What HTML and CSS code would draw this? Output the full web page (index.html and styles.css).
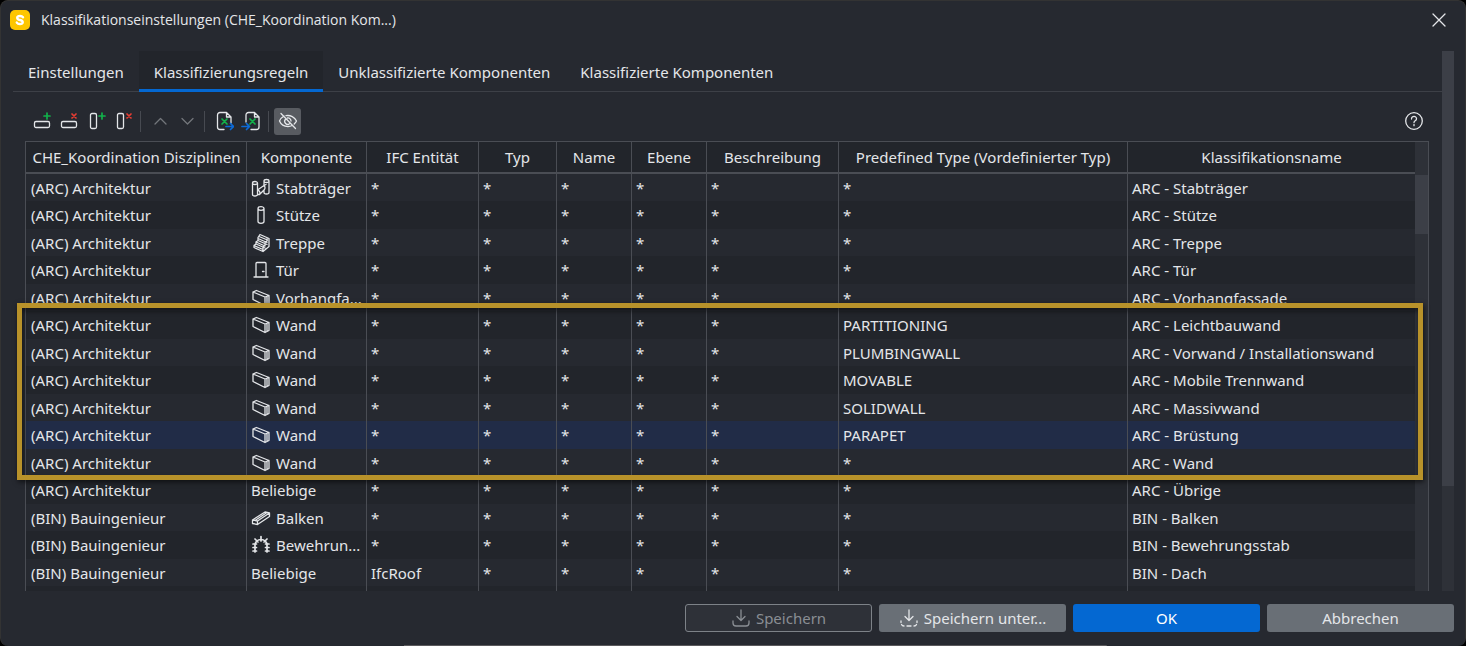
FILE: index.html
```html
<!DOCTYPE html>
<html lang="de">
<head>
  <meta charset="UTF-8">
  <title>Klassifikationseinstellungen</title>
  <meta name="viewport" content="width=device-width, initial-scale=1.0">
  <link rel="stylesheet" href="styles.css">
</head>
<body>

<!-- Symbole -->
<svg class="sprite" xmlns="http://www.w3.org/2000/svg">
  <symbol id="i-beam-col" viewBox="0 0 20 20">
    <path d="M1.500 5v11.500a2.500 1.500 0 0 0 5 0V5M1.500 5a2.500 1.500 0 0 1 5 0a2.500 1.500 0 0 1-5 0M13 3v4.500L6.500 12M13 3a2.500 1.500 0 0 1 5 0a2.500 1.500 0 0 1-5 0M18 3v11.500a2.500 1.500 0 0 1-5 0V12L8.500 16.500H6.500M13 7.500a3 3 0 0 1 0 4.500M6.500 12a3 3 0 0 1 2 4.500M13 7.500l2-1"/>
  </symbol>
  <symbol id="i-column" viewBox="0 0 20 20">
    <path d="M7 3.500v13a3 1.800 0 0 0 6 0v-13a3 1.800 0 0 0-6 0a3 1.800 0 0 0 6 0"/>
  </symbol>
  <symbol id="i-stairs" viewBox="0 0 20 20">
    <path d="M9 1.500l9 4v8l-6 5-9-4v-2l2-1.500V9l2-1.500V4.500zM12 18v-4l2-1.500v-3l2-1.500V6M3 12.500l9 4M5 11l9 4M5 9l9 4M7 7.500l9 4M7 5.500l9 4M8 3.500l8.500 3.500"/>
  </symbol>
  <symbol id="i-door" viewBox="0 0 20 20">
    <path d="M3 17h14M5 17V3.500a1 1 0 0 1 1-1h8a1 1 0 0 1 1 1V17M11.500 11.500h1.500"/>
  </symbol>
  <symbol id="i-wall" viewBox="0 0 20 20">
    <path d="M2 4v7.500l12 6V9zM2 4l3.500-1.500L18 7.500 14 9M18 7.500v8L14 17.500M16 9v7"/>
  </symbol>
  <symbol id="i-beam" viewBox="0 0 20 20">
    <path d="M1.500 12L14 4l4.500 1v3.500L6.500 16.500l-5-1zM1.500 12l5 1v3.500M6.500 13l12-8M4 12.500L16 4.500"/>
  </symbol>
  <symbol id="i-rebar" viewBox="0 0 20 20">
    <path class="bold" d="M4 17V10a6 5.500 0 0 1 12 0v7M10 1.500v4.500M4 4l3 3M16 4l-3 3M2 9h3.500M14.500 9H18M2 12.500h3.500M14.500 12.500H18M2 16h3.500M14.500 16H18"/>
  </symbol>
  <symbol id="i-save" viewBox="0 0 20 20">
    <path d="M10 2v10M6 8.500l4 4 4-4M2 13v2a3 3 0 0 0 3 3h10a3 3 0 0 0 3-3v-2"/>
  </symbol>
  <symbol id="i-save-as" viewBox="0 0 20 20">
    <path d="M10 2v10M6 8.500l4 4 4-4M2 13v1.500M2.500 16.500Q3.200 18 5 18M8 18h4M15 18q1.800 0 2.500-1.500M18 14.500V13"/>
  </symbol>
</svg>

<div class="window">
  <header class="titlebar">
    <svg class="logo" viewBox="0 0 20 20">
      <rect width="20" height="20" rx="5" fill="#fdc600"/>
      <path d="M13 7.200C12.300 6.300 11.300 6 10 6c-3.800 0-3.600 3.400 0 4s3.700 4 0 4c-1.400 0-2.500-.4-3.200-1.400" fill="none" stroke="#fff" stroke-width="2.400"/>
    </svg>
    <h1>Klassifikationseinstellungen (CHE_Koordination Kom...)</h1>
    <button class="close" aria-label="Schließen">
      <svg viewBox="0 0 14 14"><path d="M1 1l12 12M13 1L1 13"/></svg>
    </button>
  </header>

  <main class="content">
    <div class="page">
      <nav class="tabs">
        <button class="tab">Einstellungen</button>
        <button class="tab active">Klassifizierungsregeln</button>
        <button class="tab">Unklassifizierte Komponenten</button>
        <button class="tab">Klassifizierte Komponenten</button>
      </nav>

      <div class="toolbar">
        <button class="tool" aria-label="Zeile hinzufügen">
          <svg viewBox="0 0 20 20"><rect x="2.500" y="10.500" width="15" height="6" rx="1.500"/><path class="green" d="M15 2v6M12 5h6"/></svg>
        </button>
        <button class="tool" aria-label="Zeile löschen">
          <svg viewBox="0 0 20 20"><rect x="2.500" y="10.500" width="15" height="6" rx="1.500"/><path class="red" d="M13 3l4 4M17 3l-4 4"/></svg>
        </button>
        <button class="tool" aria-label="Spalte hinzufügen">
          <svg viewBox="0 0 20 20"><rect x="4.500" y="2.500" width="6" height="15" rx="1.500"/><path class="green" d="M16 2v6M13 5h6"/></svg>
        </button>
        <button class="tool" aria-label="Spalte löschen">
          <svg viewBox="0 0 20 20"><rect x="4.500" y="2.500" width="6" height="15" rx="1.500"/><path class="red" d="M14 3l4 4M18 3l-4 4"/></svg>
        </button>
        <span class="sep"></span>
        <button class="tool dim" aria-label="Nach oben">
          <svg viewBox="0 0 20 20"><path d="M5 13l5.500-5.500L16 13"/></svg>
        </button>
        <button class="tool dim" aria-label="Nach unten">
          <svg viewBox="0 0 20 20"><path d="M5 7.500l5.500 5.500L16 7.500"/></svg>
        </button>
        <span class="sep"></span>
        <button class="tool" aria-label="Excel exportieren">
          <svg viewBox="0 0 20 20"><path d="M10 18.500H6A2.500 2.500 0 0 1 3.500 16V4A2.500 2.500 0 0 1 6 1.500h6.500L17 6v6M12.500 1.500V6H17"/><path class="green" d="M8 8l5 5M13 8l-5 5"/><path class="blue" d="M12 15.500h7M16.500 12.500l3 3-3 3"/></svg>
        </button>
        <button class="tool" aria-label="Excel importieren">
          <svg viewBox="0 0 20 20"><path d="M10 18.500h5.500A2.500 2.500 0 0 0 18 16V6l-4.500-4.500H7.500A2.500 2.500 0 0 0 5 4v7M13.500 1.500V6H18"/><path class="green" d="M9 8l5 5M14 8l-5 5"/><path class="blue" d="M1 15.500h7M5.500 12.500l3 3-3 3"/></svg>
        </button>
        <span class="sep"></span>
        <button class="tool pressed" aria-label="Ausblenden">
          <svg viewBox="0 0 20 20"><path d="M6 5C3.500 6.500 2 8.500 1.500 10c1.500 3.500 5 5.500 8.500 5.500 1.500 0 3-.4 4.200-1M8 4.700c4.500-.9 8.700 1.500 10.500 5.300-.4 1-1.200 2-2.300 3M7.300 8.500a3 3 0 0 0 4.200 4.200M9.500 7a3 3 0 0 1 3.500 3M3 2.500l14.500 15"/></svg>
        </button>
        <button class="tool help" aria-label="Hilfe">
          <svg viewBox="0 0 20 20"><circle cx="10" cy="10" r="8.300"/><path d="M7.500 8c0-3.500 5.200-3.300 5 0 0 1.800-2.500 1.800-2.500 3.500M10 13.500v1.200"/></svg>
        </button>
      </div>

      <div class="grid">
        <div class="grid-view">
          <table class="rules">
            <colgroup>
              <col class="c-disc"><col class="c-comp"><col class="c-ifc"><col class="c-typ"><col class="c-name"><col class="c-name"><col class="c-desc"><col class="c-pre"><col>
            </colgroup>
            <thead>
              <tr><th>CHE_Koordination Disziplinen</th><th>Komponente</th><th>IFC Entität</th><th>Typ</th><th>Name</th><th>Ebene</th><th>Beschreibung</th><th>Predefined Type (Vordefinierter Typ)</th><th>Klassifikationsname</th></tr>
            </thead>
            <tbody>
              <tr><td>(ARC) Architektur</td><td><svg class="ico"><use href="#i-beam-col"/></svg>Stabträger</td><td>*</td><td>*</td><td>*</td><td>*</td><td>*</td><td>*</td><td>ARC - Stabträger</td></tr>
              <tr><td>(ARC) Architektur</td><td><svg class="ico"><use href="#i-column"/></svg>Stütze</td><td>*</td><td>*</td><td>*</td><td>*</td><td>*</td><td>*</td><td>ARC - Stütze</td></tr>
              <tr><td>(ARC) Architektur</td><td><svg class="ico"><use href="#i-stairs"/></svg>Treppe</td><td>*</td><td>*</td><td>*</td><td>*</td><td>*</td><td>*</td><td>ARC - Treppe</td></tr>
              <tr><td>(ARC) Architektur</td><td><svg class="ico"><use href="#i-door"/></svg>Tür</td><td>*</td><td>*</td><td>*</td><td>*</td><td>*</td><td>*</td><td>ARC - Tür</td></tr>
              <tr><td>(ARC) Architektur</td><td><svg class="ico"><use href="#i-wall"/></svg>Vorhangfa...</td><td>*</td><td>*</td><td>*</td><td>*</td><td>*</td><td>*</td><td>ARC - Vorhangfassade</td></tr>
              <tr><td>(ARC) Architektur</td><td><svg class="ico"><use href="#i-wall"/></svg>Wand</td><td>*</td><td>*</td><td>*</td><td>*</td><td>*</td><td>PARTITIONING</td><td>ARC - Leichtbauwand</td></tr>
              <tr><td>(ARC) Architektur</td><td><svg class="ico"><use href="#i-wall"/></svg>Wand</td><td>*</td><td>*</td><td>*</td><td>*</td><td>*</td><td>PLUMBINGWALL</td><td>ARC - Vorwand / Installationswand</td></tr>
              <tr><td>(ARC) Architektur</td><td><svg class="ico"><use href="#i-wall"/></svg>Wand</td><td>*</td><td>*</td><td>*</td><td>*</td><td>*</td><td>MOVABLE</td><td>ARC - Mobile Trennwand</td></tr>
              <tr><td>(ARC) Architektur</td><td><svg class="ico"><use href="#i-wall"/></svg>Wand</td><td>*</td><td>*</td><td>*</td><td>*</td><td>*</td><td>SOLIDWALL</td><td>ARC - Massivwand</td></tr>
              <tr class="selected"><td>(ARC) Architektur</td><td><svg class="ico"><use href="#i-wall"/></svg>Wand</td><td>*</td><td>*</td><td>*</td><td>*</td><td>*</td><td>PARAPET</td><td>ARC - Brüstung</td></tr>
              <tr><td>(ARC) Architektur</td><td><svg class="ico"><use href="#i-wall"/></svg>Wand</td><td>*</td><td>*</td><td>*</td><td>*</td><td>*</td><td>*</td><td>ARC - Wand</td></tr>
              <tr><td>(ARC) Architektur</td><td>Beliebige</td><td>*</td><td>*</td><td>*</td><td>*</td><td>*</td><td>*</td><td>ARC - Übrige</td></tr>
              <tr><td>(BIN) Bauingenieur</td><td><svg class="ico"><use href="#i-beam"/></svg>Balken</td><td>*</td><td>*</td><td>*</td><td>*</td><td>*</td><td>*</td><td>BIN - Balken</td></tr>
              <tr><td>(BIN) Bauingenieur</td><td><svg class="ico"><use href="#i-rebar"/></svg>Bewehrun...</td><td>*</td><td>*</td><td>*</td><td>*</td><td>*</td><td>*</td><td>BIN - Bewehrungsstab</td></tr>
              <tr><td>(BIN) Bauingenieur</td><td>Beliebige</td><td>IfcRoof</td><td>*</td><td>*</td><td>*</td><td>*</td><td>*</td><td>BIN - Dach</td></tr>
              <tr><td></td><td></td><td></td><td></td><td></td><td></td><td></td><td></td><td></td></tr>
            </tbody>
          </table>
          <div class="grid-scroll"><div class="thumb"></div></div>
        </div>
        <div class="marker"></div>
      </div>
    </div>
    <div class="page-scroll"><div class="thumb"></div></div>
  </main>

  <footer class="actions">
    <button class="btn" disabled><svg class="ico"><use href="#i-save"/></svg>Speichern</button>
    <button class="btn gray"><svg class="ico"><use href="#i-save-as"/></svg>Speichern unter...</button>
    <button class="btn primary">OK</button>
    <button class="btn gray">Abbrechen</button>
  </footer>
</div>

</body>
</html>
```

FILE: styles.css
```css
* {
  box-sizing: border-box;
}

body {
  margin: 0;
  background: #000;
  color: #e4e6e9;
  font: 15px/20px "Noto Sans", "Open Sans", sans-serif;
}

button {
  font: inherit;
  color: inherit;
  background: none;
  border: 0;
  padding: 0;
}

svg {
  fill: none;
  stroke: currentColor;
  stroke-width: 1.3;
  stroke-linecap: round;
  stroke-linejoin: round;
}

.sprite {
  display: none;
}

.window {
  display: flex;
  flex-direction: column;
  height: 100vh;
  background: #262930;
  border: 1px solid #333333;
  border-bottom: 0;
  border-radius: 8px;
  overflow: hidden;
}

/* title bar */
.titlebar {
  display: flex;
  align-items: center;
  height: 38px;
  padding: 0 19px 0 9px;
}

.logo {
  width: 20px;
  height: 20px;
  stroke: none;
}

.titlebar h1 {
  flex: 1;
  margin: 0 0 0 11px;
  font: 14px/20px "Open Sans", "Noto Sans", sans-serif;
}

.close svg {
  display: block;
  width: 14px;
  height: 14px;
}

/* content */
.content {
  flex: 1;
  min-height: 0;
  display: flex;
  padding: 12px 11px 0 12px;
}

.page {
  flex: 1;
  display: flex;
  flex-direction: column;
}

.page-scroll {
  width: 12px;
  background: #2e3138;
}

.page-scroll .thumb {
  height: 435px;
  background: #3c3f47;
}

.tabs {
  display: flex;
  border-bottom: 1px solid #3d4047;
}

.tab {
  height: 41px;
  padding: 3px 15px 0;
  margin-bottom: -1px;
  border-bottom: 3px solid transparent;
}

.tab.active {
  background: #22252b;
  border-bottom-color: #0468d2;
}

.toolbar {
  display: flex;
  align-items: center;
  height: 49px;
  padding: 9px 15px 0 15px;
}

.tool {
  display: flex;
  align-items: center;
  justify-content: center;
  width: 27px;
  height: 27px;
}

.tool svg {
  width: 20px;
  height: 20px;
}

.tool.dim {
  color: #73767b;
}

.tool.pressed {
  background: #585b61;
  border-radius: 3px;
}

.tool.help {
  margin-left: auto;
}

.sep {
  width: 1px;
  height: 21px;
  margin: 0 5px 0 4px;
  background: #474a51;
}

.green {
  stroke: #12b24b;
  stroke-width: 1.7;
}

.red {
  stroke: #e53c32;
  stroke-width: 1.7;
}

.blue {
  stroke: #0c6ad8;
  stroke-width: 1.7;
}

.bold {
  stroke-width: 1.7;
}

/* rules table */
.grid {
  flex: 1;
  min-height: 0;
  position: relative;
  margin: 0 13px 0 12px;
}

.grid-view {
  display: flex;
  height: 100%;
  overflow: hidden;
  border: 1px solid #4a4d54;
  border-bottom: 0;
}

.rules {
  flex: 1;
  min-width: 0;
  height: 0;
  table-layout: fixed;
  border-collapse: separate;
  border-spacing: 0;
}

.c-disc { width: 221px; }
.c-comp { width: 120px; }
.c-ifc { width: 112px; }
.c-typ { width: 78px; }
.c-name { width: 75px; }
.c-desc { width: 132px; }
.c-pre { width: 289px; }

th,
td {
  padding: 0 4px;
  border-right: 1px solid #4a4d54;
  white-space: nowrap;
  overflow: hidden;
}

th:first-child,
td:first-child {
  padding-left: 5px;
}

th:last-child,
td:last-child {
  border-right: 0;
}

th {
  height: 32px;
  font-weight: normal;
  background: #22252b;
  border-bottom: 2px solid #4a4d54;
}

td {
  height: 27px;
  text-align: left;
}

tbody tr:nth-child(even) {
  background: #22252b;
}

tbody tr:nth-child(even) td {
  height: 28px;
}

tbody tr.selected {
  background: #212c47;
}

.ico {
  width: 20px;
  height: 20px;
  margin-right: 5px;
  vertical-align: -4px;
}

.grid-scroll {
  width: 13px;
  padding-top: 33px;
  background: #2e3138;
}

.grid-scroll .thumb {
  height: 59px;
  background: #3c3f47;
}

/* frame drawn over the wall rows */
.marker {
  position: absolute;
  top: 162px;
  left: -8px;
  right: 6px;
  height: 177px;
  border: 5px solid #b8922a;
  box-shadow: 1px 2px 5px rgba(0, 0, 0, .6), inset 1px 3px 5px rgba(0, 0, 0, .5);
}

/* footer */
.actions {
  display: flex;
  justify-content: flex-end;
  gap: 7px;
  padding: 13px 11px 14px;
  background: linear-gradient(#5a595c, #5a595c) no-repeat 53% 100% / 48% 1px;
}

.btn {
  display: flex;
  align-items: center;
  justify-content: center;
  width: 187px;
  height: 28px;
  border-radius: 3px;
}

.btn:disabled {
  color: #8a8e94;
  background: #2e3138;
  border: 1px solid #7d8288;
}

.btn.gray {
  background: #696f76;
}

.btn.primary {
  background: #0468d2;
  color: #fff;
}
```
